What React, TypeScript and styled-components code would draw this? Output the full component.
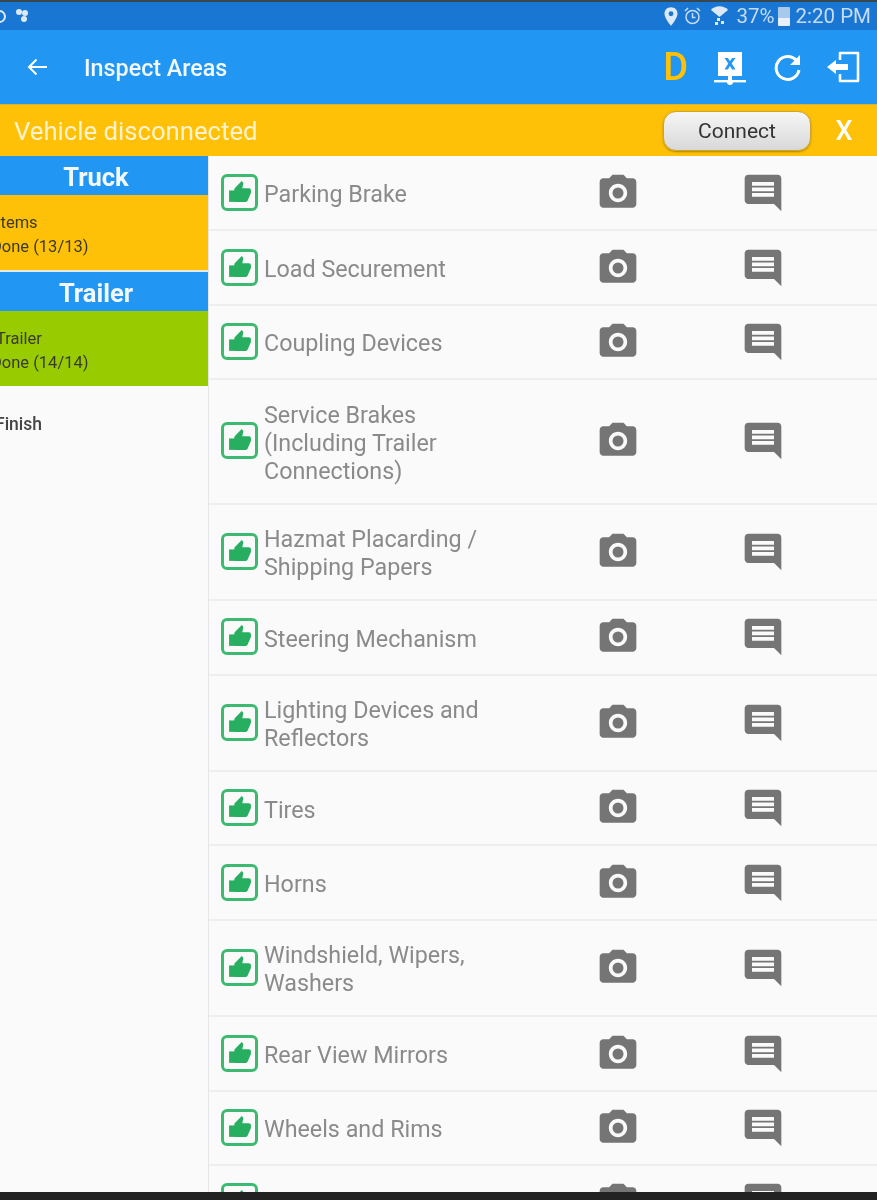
import styled, { createGlobalStyle } from "styled-components";

const GlobalStyle = createGlobalStyle`
  html, body {
    margin: 0;
    padding: 0;
    background: #fafafa;
    font-family: Roboto, "Noto Sans", sans-serif;
  }
`;

const items = [
  "Parking Brake",
  "Load Securement",
  "Coupling Devices",
  "Service Brakes (Including Trailer Connections)",
  "Hazmat Placarding / Shipping Papers",
  "Steering Mechanism",
  "Lighting Devices and Reflectors",
  "Tires",
  "Horns",
  "Windshield, Wipers, Washers",
  "Rear View Mirrors",
  "Wheels and Rims",
  "",
];

const ThumbIcon = () => (
  <svg width="25" height="25" viewBox="0 0 24 24" fill="#27ae60">
    <path d="M2 10h8v11H2z" />
    <path d="M23 10c0-1.100-.9-2-2-2h-6.310l.95-4.570.03-.320c0-.41-.17-.79-.44-1.060L14.170 1 7.590 7.590C7.220 7.950 7 8.450 7 9v10c0 1.100.9 2 2 2h9c.83 0 1.540-.5 1.840-1.220l3.020-7.050c.09-.23.14-.47.14-.73v-2z" />
  </svg>
);

const CameraIcon = () => (
  <svg width="44" height="44" viewBox="0 0 24 24" fill="#757575">
    <circle cx="12" cy="12" r="3" />
    <path d="M9 2L7.170 4H4c-1.100 0-2 .9-2 2v12c0 1.100.9 2 2 2h16c1.100 0 2-.9 2-2V6c0-1.100-.9-2-2-2h-3.170L15 2H9zm3 15c-2.760 0-5-2.240-5-5s2.240-5 5-5 5 2.240 5 5-2.240 5-5 5z" />
  </svg>
);

const CommentIcon = () => (
  <svg width="44" height="44" viewBox="0 0 24 24" fill="#757575">
    <path d="M21.990 4c0-1.100-.89-2-1.990-2H4c-1.100 0-2 .9-2 2v12c0 1.100.9 2 2 2h14l4 4-.01-18zM18 14H6v-2h12v2zm0-3H6V9h12v2zm0-3H6V6h12v2z" />
  </svg>
);

const NetworkIcon = () => (
  <svg width="32" height="34" viewBox="0 0 32 34" fill="#fff">
    <path
      fillRule="evenodd"
      d="M4 0h24v24H4zM10.500 6l3.800 5.600-3.800 5.900h3.400l2.100-3.500 2.100 3.500h3.400l-3.800-5.900L21.500 6h-3.400l-2.100 3.300L13.900 6z"
    />
    <rect x="14" y="24" width="4" height="6" />
    <rect x="0" y="28" width="32" height="2.400" />
    <circle cx="16" cy="30" r="3" />
  </svg>
);

const RefreshIcon = () => (
  <svg width="28" height="30" viewBox="0 0 28 30" fill="none" stroke="#fff" strokeWidth="3">
    <path d="M25 18a11.500 11.500 0 1 1-2.500-9.500" />
    <path d="M26 3v10H16z" fill="#fff" stroke="none" />
  </svg>
);

const ExitIcon = () => (
  <svg width="33" height="32" viewBox="0 0 33 32" fill="none" stroke="#fff" strokeWidth="2.600">
    <path d="M13 9V2h18v28H13v-7" strokeLinejoin="round" />
    <path d="M0 16l9-7v4h12v6H9v4z" fill="#fff" stroke="none" />
  </svg>
);

const BackIcon = () => (
  <svg width="20" height="20" viewBox="0 0 20 20" fill="none" stroke="#fff" strokeWidth="2">
    <path d="M20 10H2M9.500 2.500L2 10l7.500 7.500" />
  </svg>
);

const PinIcon = () => (
  <svg width="14" height="19" viewBox="0 0 15 20" fill="#dce9f8">
    <path
      fillRule="evenodd"
      d="M7.500 0C3.400 0 .5 3 .5 7c0 4.500 7 13 7 13s7-8.500 7-13c0-4-2.900-7-7-7zm0 4.500a2.600 2.600 0 1 1 0 5.200 2.600 2.600 0 0 1 0-5.200z"
    />
  </svg>
);

const AlarmIcon = () => (
  <svg width="17" height="18" viewBox="0 0 17 18" fill="none" stroke="#c6dcf4" strokeWidth="1.500">
    <circle cx="8.500" cy="10" r="6.500" />
    <path d="M8.500 6v4.500h3M1 4l3-3M16 4l-3-3" />
  </svg>
);

const SignalIcon = () => (
  <svg width="17" height="20" viewBox="0 0 17 20" fill="#dce9f8">
    <path d="M0 4c4-5 13-5 17 0l-8.500 7z" />
    <rect x="6" y="12" width="3" height="3" />
    <rect x="4" y="16" width="3" height="3" />
    <rect x="10" y="15" width="3" height="3" />
  </svg>
);

const BlurIcon = () => (
  <svg width="16" height="16" viewBox="0 0 16 16" fill="#dce9f8">
    <circle cx="4" cy="4" r="3" />
    <circle cx="10" cy="5" r="3" />
    <circle cx="9" cy="11" r="3" />
  </svg>
);

const App = () => {
  return (
    <Page>
      <GlobalStyle />
      <TopEdge />
      <StatusBar>
        <StatusLeft>
          <RingGlyph />
          <BlurIcon />
        </StatusLeft>
        <StatusRight>
          <PinIcon />
          <AlarmIcon />
          <SignalSlot>
            <SignalIcon />
          </SignalSlot>
          <StatusText>37%</StatusText>
          <Battery />
          <StatusText>2:20 PM</StatusText>
        </StatusRight>
      </StatusBar>
      <AppBar>
        <BackSlot>
          <BackIcon />
        </BackSlot>
        <Title>Inspect Areas</Title>
        <Actions>
          <DriverLetter>D</DriverLetter>
          <NetworkSlot>
            <NetworkIcon />
          </NetworkSlot>
          <RefreshIcon />
          <ExitIcon />
        </Actions>
      </AppBar>
      <Banner>
        <BannerText>Vehicle disconnected</BannerText>
        <ConnectButton>Connect</ConnectButton>
        <CloseMark>X</CloseMark>
      </Banner>
      <Body>
        <Sidebar>
          <GroupTitle>Truck</GroupTitle>
          <GroupCard $color="#ffc107">
            <CardLine>Items</CardLine>
            <CardLine>Done (13/13)</CardLine>
          </GroupCard>
          <Gap />
          <GroupTitle>Trailer</GroupTitle>
          <GroupCard $color="#99cc00">
            <CardLine>Trailer</CardLine>
            <CardLine>Done (14/14)</CardLine>
          </GroupCard>
          <FinishRow>
            <FinishLine>Finish</FinishLine>
          </FinishRow>
        </Sidebar>
        <List>
          {items.map((name, i) => (
            <Row key={i}>
              <ThumbBox>
                <ThumbIcon />
              </ThumbBox>
              <Label>{name}</Label>
              <IconCell>
                <CameraIcon />
              </IconCell>
              <IconCell>
                <CommentIcon />
              </IconCell>
            </Row>
          ))}
        </List>
      </Body>
      <BottomEdge />
    </Page>
  );
};

export default App;

const Page = styled.div`
  width: 877px;
  height: 1200px;
  display: flex;
  flex-direction: column;
  overflow: hidden;
  background: #fafafa;
  filter: blur(0.5px);
`;

const TopEdge = styled.div`
  height: 2px;
  background: #37474f;
`;

const StatusBar = styled.div`
  height: 28px;
  display: flex;
  align-items: center;
  justify-content: space-between;
  padding-right: 6px;
  background: #1976d2;
`;

const StatusLeft = styled.div`
  display: flex;
  align-items: center;
  gap: 9px;
  margin-left: -7px;
`;

const RingGlyph = styled.span`
  width: 9px;
  height: 9px;
  border: 2px solid #dce9f8;
  border-radius: 50%;
`;

const StatusRight = styled.div`
  display: flex;
  align-items: center;
  gap: 6px;
`;

const SignalSlot = styled.div`
  display: flex;
  margin-left: 4px;
  margin-right: -2px;
`;

const StatusText = styled.span`
  font-size: 20.5px;
  color: #c6dcf4;
  margin-left: 4px;
`;

const Battery = styled.span`
  width: 12px;
  height: 19px;
  margin-left: -3px;
  margin-right: -4px;
  border-radius: 1px;
  background: linear-gradient(#a9c9ea 60%, #e8f1fb 60%);
`;

const AppBar = styled.header`
  height: 74px;
  display: flex;
  align-items: center;
  background: #2196f3;
`;

const BackSlot = styled.div`
  width: 84px;
  padding-left: 27px;
  box-sizing: border-box;
  display: flex;
`;

const Title = styled.h1`
  margin: 2px 0 0;
  flex: 1;
  font-size: 23.3px;
  font-weight: 500;
  color: #f2f8fe;
`;

const Actions = styled.div`
  display: flex;
  align-items: center;
  gap: 25px;
  padding-right: 17px;
`;

const NetworkSlot = styled.div`
  display: flex;
  margin-top: 3px;
  margin-right: 3px;
`;

const DriverLetter = styled.span`
  font-size: 38px;
  font-weight: 500;
  color: #ffc107;
  margin-right: 1px;
`;

const Banner = styled.div`
  height: 52px;
  display: flex;
  align-items: center;
  padding-left: 14px;
  background: #ffc107;
  border-top: 1px solid #d9b23a;
  box-sizing: border-box;
`;

const BannerText = styled.span`
  flex: 1;
  font-size: 25.7px;
  color: #fff3cf;
`;

const ConnectButton = styled.button`
  width: 148px;
  height: 40px;
  padding: 0;
  border: 1px solid #cda52c;
  border-radius: 13px;
  background: linear-gradient(#f6f6f6, #d8d8d8);
  box-shadow: 0 1px 2px rgba(90, 70, 0, 0.5);
  font-family: inherit;
  font-size: 21px;
  color: #333;
`;

const CloseMark = styled.span`
  width: 66px;
  text-align: center;
  font-size: 27px;
  font-weight: 500;
  color: #fff;
`;

const Body = styled.div`
  flex: 1;
  min-height: 0;
  display: flex;
`;

const Sidebar = styled.aside`
  width: 208px;
  flex-shrink: 0;
  overflow: hidden;
`;

const GroupTitle = styled.div`
  height: 39px;
  box-sizing: border-box;
  padding-right: 16px;
  line-height: 43px;
  text-align: center;
  font-size: 25.5px;
  font-weight: 700;
  color: #f2f8fe;
  background: #2196f3;
`;

const GroupCard = styled.div<{ $color: string }>`
  height: 75px;
  display: flex;
  flex-direction: column;
  justify-content: center;
  gap: 5px;
  padding-top: 3px;
  box-sizing: border-box;
  background: ${(p) => p.$color};
`;

const Gap = styled.div`
  height: 2px;
  background: #e8e8e8;
`;

const CardLine = styled.span`
  margin-left: -4px;
  font-size: 16.5px;
  line-height: 19px;
  color: #3a3a2a;
  &:last-child {
    margin-left: -9px;
  }
`;

const FinishRow = styled.div`
  display: flex;
  padding-top: 29px;
`;

const FinishLine = styled(CardLine)`
  &:last-child {
    margin-left: -5px;
  }
  font-size: 17.5px;
  font-weight: 500;
  color: #444;
`;

const List = styled.main`
  flex: 1;
  min-width: 0;
  overflow: hidden;
  padding-top: 1px;
  border-left: 1px solid #e6e6e6;
`;

const Row = styled.div`
  min-height: 74.4px;
  box-sizing: border-box;
  padding: 0;
  display: grid;
  grid-template-columns: 55px 240px 228px 62px;
  align-items: center;
  border-bottom: 2px solid #eeeeee;
`;

const ThumbBox = styled.div`
  width: 37px;
  height: 37px;
  margin-left: 12px;
  margin-top: -1px;
  box-sizing: border-box;
  display: flex;
  align-items: center;
  justify-content: center;
  border: 3px solid #3dba72;
  border-radius: 6px;
`;

const Label = styled.div`
  padding: 20.5px 0 18px;
  font-size: 23.3px;
  line-height: 28px;
  color: #8a8a8a;
`;

const IconCell = styled.div`
  height: 28px;
  margin-top: 0;
  display: flex;
  align-items: center;
  justify-content: center;
`;

const BottomEdge = styled.div`
  height: 8px;
  background: #222222;
`;
